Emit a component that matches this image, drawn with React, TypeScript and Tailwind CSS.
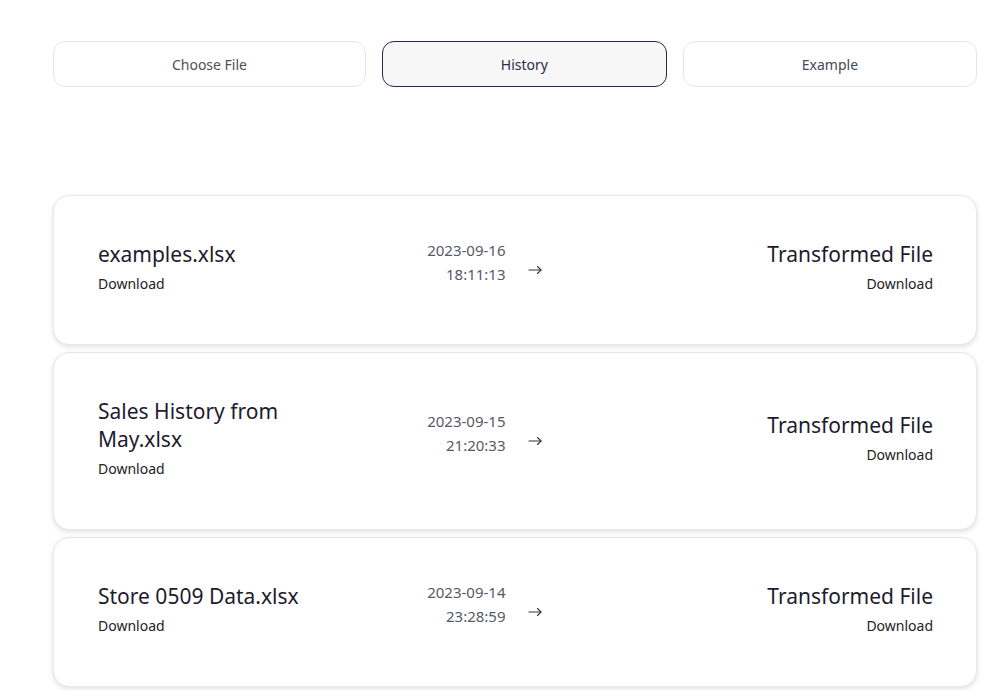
import React from "react";

const items = [
  { name: "examples.xlsx", date: "2023-09-16", time: "18:11:13" },
  { name: "Sales History from May.xlsx", date: "2023-09-15", time: "21:20:33" },
  { name: "Store 0509 Data.xlsx", date: "2023-09-14", time: "23:28:59" },
];

function Arrow() {
  return (
    <svg width="14" height="10" viewBox="0 0 14 10" fill="none" stroke="#333" strokeWidth="1.1" strokeLinecap="round" strokeLinejoin="round">
      <path d="M1 5h12" />
      <path d="M9.5 1.5L13 5l-3.5 3.5" />
    </svg>
  );
}

export default function App() {
  return (
    <div
      className="min-h-screen bg-white pl-[53px] pr-[28px] pt-[41px]"
      style={{ fontFamily: '"Noto Sans", "Open Sans", sans-serif' }}
    >
      <div className="flex gap-4">
        <button className="flex-auto h-[46px] rounded-xl border border-[#e6e6e6] bg-white text-[14px] text-[#4a4f5a]">
          Choose File
        </button>
        <button className="flex-auto h-[46px] rounded-xl border border-[#1f2a44] bg-[#f7f7f7] text-[14px] text-[#2e2a48]">
          History
        </button>
        <button className="flex-auto h-[46px] rounded-xl border border-[#e6e6e6] bg-white text-[14px] text-[#3f4a5a]">
          Example
        </button>
      </div>

      <div className="mt-[108px] flex flex-col gap-[7px]">
        {items.map((it) => (
          <div
            key={it.name}
            className="rounded-2xl border border-[#e7e7e7] bg-white pl-11 pr-[43px] pt-11 pb-[50px] shadow-[0_2px_5px_rgba(0,0,0,0.12)]"
          >
            <div className="grid grid-cols-4 items-center">
              <div className="flex flex-col">
                <div className="text-[21px] leading-[28px] text-[#1d1b2e]">{it.name}</div>
                <div className="mt-1.5 text-[14px] leading-[20px] text-[#222]">Download</div>
              </div>
              <div className="-translate-y-[5px] flex flex-col items-end pr-[10px] text-[15px] leading-[24px] text-[#555a66]">
                <div>{it.date}</div>
                <div>{it.time}</div>
              </div>
              <div className="translate-y-[3px] pl-3">
                <Arrow />
              </div>
              <div className="flex flex-col items-end">
                <div className="text-[21px] leading-[28px] text-[#1d1b2e]">Transformed File</div>
                <div className="mt-1.5 text-[14px] leading-[20px] text-[#222]">Download</div>
              </div>
            </div>
          </div>
        ))}
      </div>
    </div>
  );
}
